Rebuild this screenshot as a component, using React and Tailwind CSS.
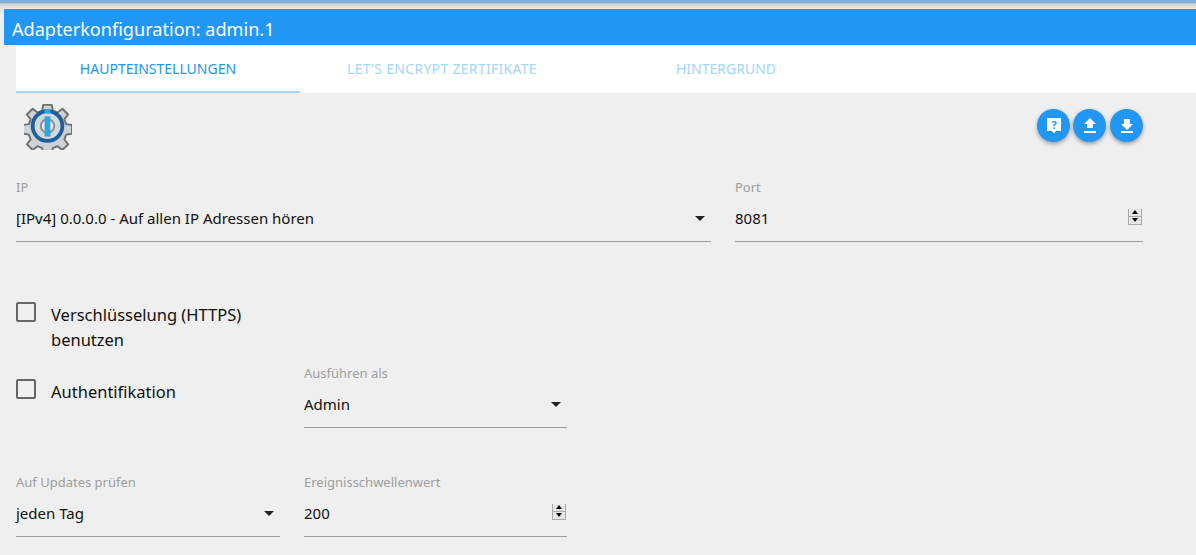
function Stepper() {
  return (
    <div className="mr-[1px] -mt-[3px] w-[14px] h-[16px] flex flex-col border-x border-b border-[#aaa] bg-[#e6e6e6]">
      <div className="h-[8px] flex items-center justify-center border-b border-[#aaa]">
        <div className="w-0 h-0 border-x-[3.5px] border-x-transparent border-b-[4px] border-b-black" />
      </div>
      <div className="h-[7px] flex items-center justify-center">
        <div className="w-0 h-0 border-x-[3.5px] border-x-transparent border-t-[4px] border-t-black" />
      </div>
    </div>
  );
}

function Field({ label, value, kind, className }) {
  return (
    <div className={className}>
      <div className="text-[13px] leading-[16px] text-[#9e9e9e]">{label}</div>
      <div className="flex items-center justify-between h-[20px] mt-[13px] mb-[13px]">
        <span className="text-[15px] leading-[20px] text-[#111]">{value}</span>
        {kind === "select" ? (
          <div className="mr-[6px] w-0 h-0 border-x-[5.500px] border-x-transparent border-t-[5.500px] border-t-[#222]" />
        ) : (
          <Stepper />
        )}
      </div>
      <div className="h-px bg-[#9e9e9e]" />
    </div>
  );
}

function Check({ children, className }) {
  return (
    <div className={`flex items-start ${className ?? ""}`}>
      <div className="w-[20px] h-[20px] rounded-[2px] border-2 border-[#666] shrink-0" />
      <div className="ml-[15px] w-[215px] text-[16.500px] leading-[25px] text-[#111]">{children}</div>
    </div>
  );
}

function Fab({ children, className }) {
  return (
    <button className={`w-[33px] h-[33px] rounded-full bg-[#2196f3] shadow-[0_2px_4px_rgba(0,0,0,0.35)] flex items-center justify-center ${className ?? ""}`}>
      {children}
    </button>
  );
}

export default function App() {
  return (
    <div className="w-[1196px] h-[555px] overflow-hidden bg-[#efefef] font-['Noto_Sans','Open_Sans',sans-serif]">
      <div className="h-[3px] bg-[#7db0de]" />
      <div className="h-[6px] bg-gradient-to-b from-[#c8c8c8] to-[#efefef]" />
      <div className="ml-[4px] h-[36px] bg-[#2196f3] pl-[8px] flex items-center text-white text-[18.100px] leading-[24px] pt-[4px]">
        Adapterkonfiguration: admin.1
      </div>
      <div className="ml-[16px] h-[48px] bg-white flex text-[14px]">
        <div className="w-[284px] pt-[1px] flex items-center justify-center text-[#2196f3] border-b-2 border-[#a6d5fa]">HAUPTEINSTELLUNGEN</div>
        <div className="w-[284px] pb-[1px] flex items-center justify-center text-[#a6d5fa] tracking-[0.3px]">LET'S ENCRYPT ZERTIFIKATE</div>
        <div className="w-[284px] pb-[1px] flex items-center justify-center text-[#a6d5fa]">HINTERGRUND</div>
      </div>
      <div className="pl-[16px] pr-[53px]">
        <div className="flex items-start justify-between h-[86px]">
          <svg className="ml-[8px] mt-[9px]" width="48" height="48" viewBox="0 0 50 50">
            <path d="M20 3h9l1 6 5 2 5-4 6 6-4 5 2 5 6 1v9l-6 1-2 5 4 5-6 6-5-4-5 2-1 6h-9l-1-6-5-2-5 4-6-6 4-5-2-5-6-1v-9l6-1 2-5-4-5 6-6 5 4 5-2z" fill="#ccd2d8" stroke="#707070" strokeWidth="2" strokeLinejoin="round" />
            <circle cx="24.500" cy="25" r="15.500" fill="#d2d8de" stroke="#1f5f9e" strokeWidth="4" />
            <circle cx="24.500" cy="25" r="7" fill="#e4e8ea" stroke="#8a8f94" strokeWidth="2" />
            <rect x="21.500" y="8" width="6" height="4" fill="#2ea6e0" />
            <rect x="21.500" y="15" width="6" height="21" fill="#2ea6e0" />
          </svg>
          <div className="flex mt-[16px]">
            <Fab>
              <svg width="18" height="18" viewBox="0 0 18 18"><path d="M2 1h14v13h-5l-2 2.500L7 14H2z" fill="#fff" /><text x="9" y="12" textAnchor="middle" fontSize="11" fontWeight="700" fill="#2196f3">?</text></svg>
            </Fab>
            <Fab className="ml-[3px]">
              <svg width="14" height="16" viewBox="0 0 14 16"><path d="M4 10V6H1l6-6 6 6h-3v4zM1 13h12v2H1z" fill="#fff" /></svg>
            </Fab>
            <Fab className="ml-[4px]">
              <svg width="14" height="16" viewBox="0 0 14 16"><path d="M4 1h6v5h3l-6 6-6-6h3zM1 13h12v2H1z" fill="#fff" /></svg>
            </Fab>
          </div>
        </div>
        <div className="flex gap-[24px]">
          <Field className="w-[695px]" label="IP" value="[IPv4] 0.0.0.0 - Auf allen IP Adressen hören" kind="select" />
          <Field className="flex-1" label="Port" value="8081" kind="number" />
        </div>
        <div className="flex mt-[60px]">
          <div className="w-[288px] shrink-0">
            <Check>Verschlüsselung (HTTPS) benutzen</Check>
            <Check className="mt-[27px]">Authentifikation</Check>
          </div>
          <Field className="w-[263px] mt-[63px]" label="Ausführen als" value="Admin" kind="select" />
        </div>
        <div className="flex gap-[24px] mt-[46px]">
          <Field className="w-[264px]" label="Auf Updates prüfen" value="jeden Tag" kind="select" />
          <Field className="w-[263px]" label="Ereignisschwellenwert" value="200" kind="number" />
        </div>
      </div>
    </div>
  );
}
